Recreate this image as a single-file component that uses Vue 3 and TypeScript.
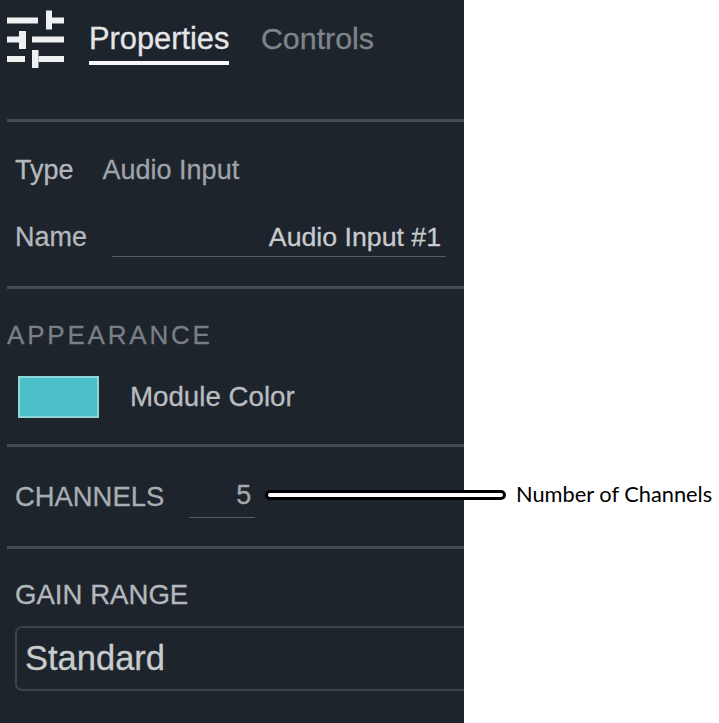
<script setup lang="ts">
const iconBars: [number, number, number, number][] = [
  [7, 17.5, 31, 6], [46, 10.5, 6, 19], [52, 17.5, 12, 6],
  [7, 36.5, 12, 6], [19, 31, 7, 18], [32, 36.5, 32, 6],
  [7, 56, 18, 6], [32, 50, 6.5, 18], [38.5, 56, 25.5, 6],
]
</script>

<template>
  <div class="page">
    <aside class="panel">
      <header class="head">
        <svg class="icon" width="64" height="70" viewBox="0 0 64 70" aria-hidden="true">
          <rect v-for="(b, i) in iconBars" :key="i" :x="b[0]" :y="b[1]" :width="b[2]" :height="b[3]" fill="#eef0f1" />
        </svg>
        <nav class="tabs">
          <span class="tab active">Properties</span>
          <span class="tab secondary">Controls</span>
        </nav>
      </header>
      <hr class="rule" />
      <section class="info">
        <div class="type-row"><span class="label">Type</span><span class="type-value">Audio Input</span></div>
        <div class="name-row"><span class="label">Name</span><span class="name-field">Audio Input #1</span></div>
      </section>
      <hr class="rule" />
      <section class="appearance">
        <h3 class="appearance-title">APPEARANCE</h3>
        <div class="color-row"><span class="swatch"></span><span class="color-label">Module Color</span></div>
      </section>
      <hr class="rule" />
      <section class="channels">
        <span class="channels-label">CHANNELS</span>
        <span class="channels-field">5</span>
      </section>
      <hr class="rule" />
      <section class="gain">
        <h3 class="gain-title">GAIN RANGE</h3>
        <div class="select">Standard</div>
      </section>
    </aside>
    <div class="callout-line"></div>
    <div class="callout-text">Number of Channels</div>
  </div>
</template>

<style>
html, body { margin: 0; background: #fff; }
</style>

<style scoped>
.page {
  position: relative;
  width: 719px;
  height: 723px;
  overflow: hidden;
  background: #fff;
  font-family: "Liberation Sans", Arial, sans-serif;
}
.panel {
  display: flex;
  flex-direction: column;
  width: 464px;
  height: 723px;
  overflow: hidden;
  background: #1e242c;
  -webkit-text-stroke: 0.3px currentColor;
}
.head {
  display: flex;
  height: 119px;
  flex: none;
}
.icon { flex: none; filter: blur(0.4px); }
.tabs {
  display: flex;
  gap: 31.5px;
  margin-left: 25px;
  height: 65px;
  align-items: flex-end;
}
.tab {
  font-size: 30.8px;
  line-height: 35px;
  padding-bottom: 5px;
  color: #7f848a;
  border-bottom: 4px solid transparent;
}
.tab.secondary { font-size: 30.4px; }
.tab.active {
  color: #e4e6e8;
  border-bottom-color: #f6f7f8;
}
.rule {
  flex: none;
  height: 3px;
  margin: 0 0 0 7px;
  border: 0;
  background: #454a54;
}
.info {
  display: flex;
  flex-direction: column;
  height: 164px;
  flex: none;
  box-sizing: border-box;
  padding: 32px 18px 0 15px;
}
.type-row {
  display: flex;
  align-items: center;
  height: 32px;
  font-size: 27px;
}
.label {
  font-size: 27px;
  color: #b3b8bc;
}
.type-value {
  margin-left: 29px;
  color: #9ea3a8;
}
.name-row {
  display: flex;
  align-items: center;
  margin-top: 35px;
  height: 32px;
}
.name-field {
  flex: 1;
  margin-left: 25px;
  height: 36px;
  line-height: 32px;
  margin-top: 3px;
  padding-right: 5px;
  box-sizing: border-box;
  text-align: right;
  font-size: 26.7px;
  color: #c8cbce;
  border-bottom: 1px solid #565b64;
}
.appearance {
  height: 155px;
  flex: none;
  box-sizing: border-box;
  padding: 31px 0 0 7px;
}
.appearance-title {
  margin: 0;
  height: 30px;
  line-height: 30px;
  font-size: 26px;
  font-weight: 400;
  letter-spacing: 2.8px;
  color: #797f85;
}
.color-row {
  display: flex;
  align-items: center;
  margin-top: 26px;
  padding-left: 11px;
}
.swatch {
  width: 81px;
  height: 42px;
  box-sizing: border-box;
  background: #4abfca;
  border: 2px solid #8fd6da;
}
.color-label {
  margin-left: 31px;
  font-size: 27.7px;
  color: #b9bcc0;
}
.channels {
  display: flex;
  height: 99px;
  flex: none;
  box-sizing: border-box;
  padding: 34px 0 0 15px;
}
.channels-label {
  height: 32px;
  line-height: 32px;
  font-size: 27.4px;
  color: #a7adb3;
}
.channels-field {
  width: 66px;
  height: 37px;
  line-height: 28px;
  margin-left: 25px;
  padding-right: 4px;
  box-sizing: border-box;
  text-align: right;
  font-size: 27px;
  color: #a5a9ad;
  border-bottom: 1px solid #565b64;
}
.gain {
  flex: 1;
  box-sizing: border-box;
  padding: 30px 0 0 15px;
}
.gain-title {
  margin: 0;
  height: 32px;
  line-height: 32px;
  font-size: 27.6px;
  font-weight: 400;
  color: #b3b8bc;
}
.select {
  width: 480px;
  height: 65px;
  margin-top: 15px;
  padding-left: 8px;
  box-sizing: border-box;
  line-height: 61px;
  font-size: 34.5px;
  color: #c8cccf;
  border: 2px solid #3d424b;
  border-radius: 7px;
}
.callout-line {
  position: absolute;
  left: 265px;
  top: 490px;
  width: 241px;
  height: 10px;
  box-sizing: border-box;
  background: #fff;
  border: 3px solid #000;
  border-radius: 5px;
}
.callout-text {
  position: absolute;
  left: 516px;
  top: 480px;
  line-height: 28px;
  font-family: Lato, sans-serif;
  font-size: 21.8px;
  color: #000;
  white-space: nowrap;
}
</style>
